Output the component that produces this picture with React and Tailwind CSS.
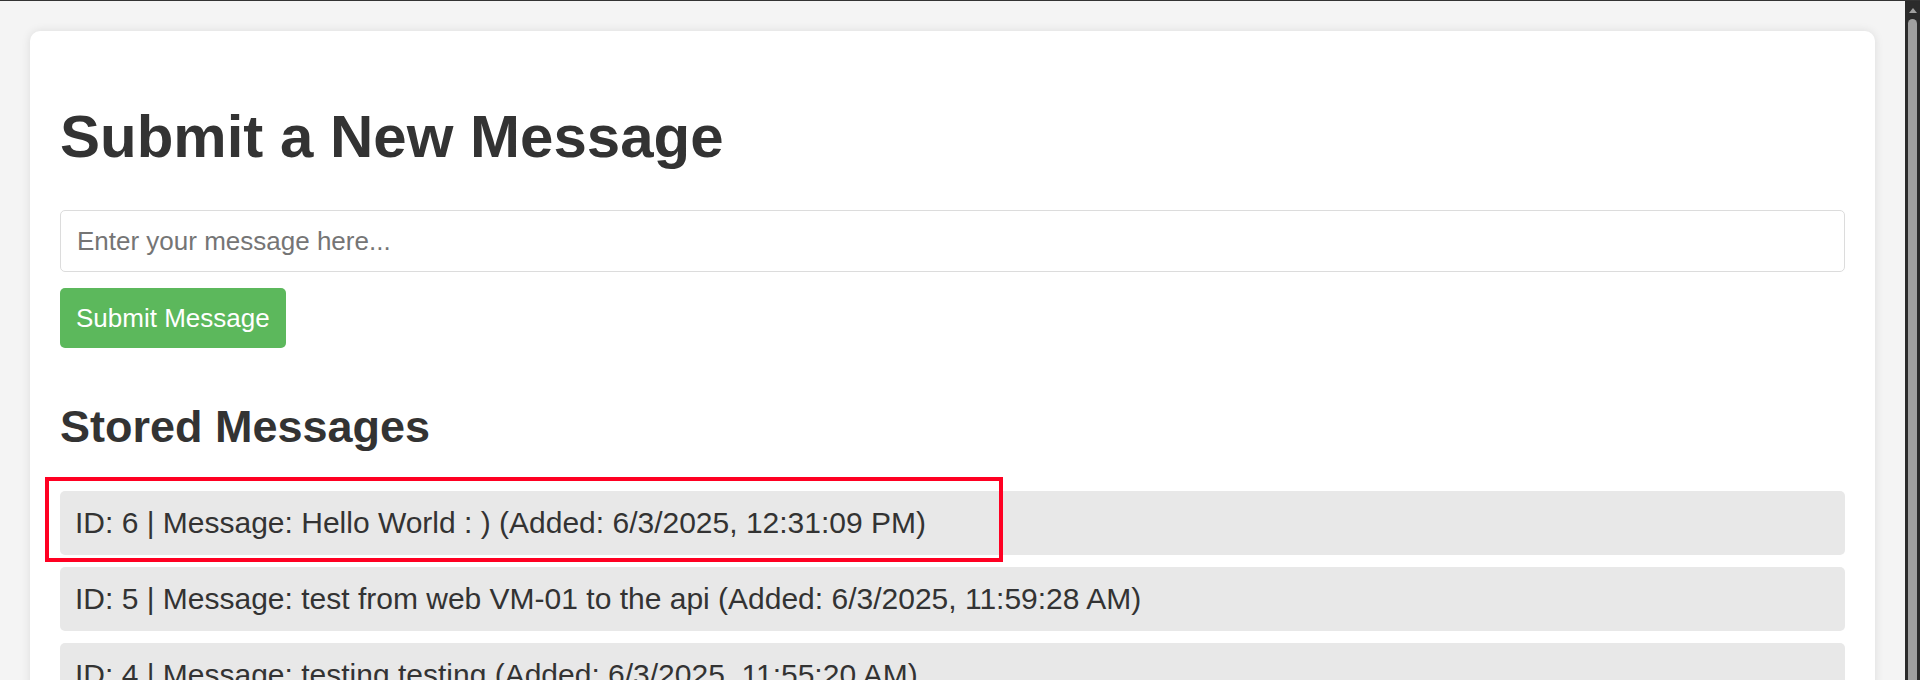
import React from "react";

const items = [
  "ID: 6 | Message: Hello World : ) (Added: 6/3/2025, 12:31:09 PM)",
  "ID: 5 | Message: test from web VM-01 to the api (Added: 6/3/2025, 11:59:28 AM)",
  "ID: 4 | Message: testing testing (Added: 6/3/2025, 11:55:20 AM)",
  "ID: 3 | Message: hello (Added: 6/3/2025, 11:50:02 AM)",
];

export default function App() {
  return (
    <div
      className="h-[680px] w-full overflow-hidden flex flex-col bg-[#f4f4f4] text-[#333]"
      style={{ fontFamily: '"Liberation Sans", Arial, sans-serif' }}
    >
      <div className="h-px w-full bg-[#333] shrink-0" />
      <div className="flex flex-1 min-h-0">
        <main className="flex-1 min-w-0 px-[30px] pt-[30px]">
          <div className="bg-white rounded-[10px] shadow-[0_0_10px_rgba(0,0,0,0.1)] px-[30px] pt-[30px] pb-[30px]">
            <h1 className="text-[60px] leading-[69px] font-bold mt-[41px] mb-[39px]">
              Submit a New Message
            </h1>
            <input
              type="text"
              placeholder="Enter your message here..."
              className="block w-full h-[62px] border border-[#dcdcdc] rounded-[5px] px-[16px] text-[26px] text-[#333] placeholder:text-[#757575] outline-none bg-white"
            />
            <button className="mt-[16px] h-[60px] px-[16px] bg-[#5cb85c] text-white text-[26px] rounded-[5px]">
              Submit Message
            </button>
            <h2 className="text-[45px] leading-[52px] font-bold mt-[53px] mb-[38px]">
              Stored Messages
            </h2>
            <div className="flex flex-col gap-[12px]">
              {items.map((t, i) => (
                <div key={i} className="relative">
                  <div className="bg-[#e8e8e8] rounded-[5px] px-[15px] py-[15px] text-[30px] leading-[34px]">
                    {t}
                  </div>
                  {i === 0 && (
                    <div className="absolute left-[-15px] top-[-14px] w-[958px] h-[85px] border-[4px] border-[#ff0022] pointer-events-none" />
                  )}
                </div>
              ))}
            </div>
          </div>
        </main>
        <div className="w-[15px] shrink-0 bg-[#2b2b2b] flex flex-col items-center">
          <div className="mt-[7px] w-0 h-0 border-l-[4px] border-r-[4px] border-b-[5px] border-l-transparent border-r-transparent border-b-[#a0a0a0]" />
          <div className="mt-[6px] w-[9px] flex-1 bg-[#a0a0a0] rounded-t-full" />
        </div>
      </div>
    </div>
  );
}
